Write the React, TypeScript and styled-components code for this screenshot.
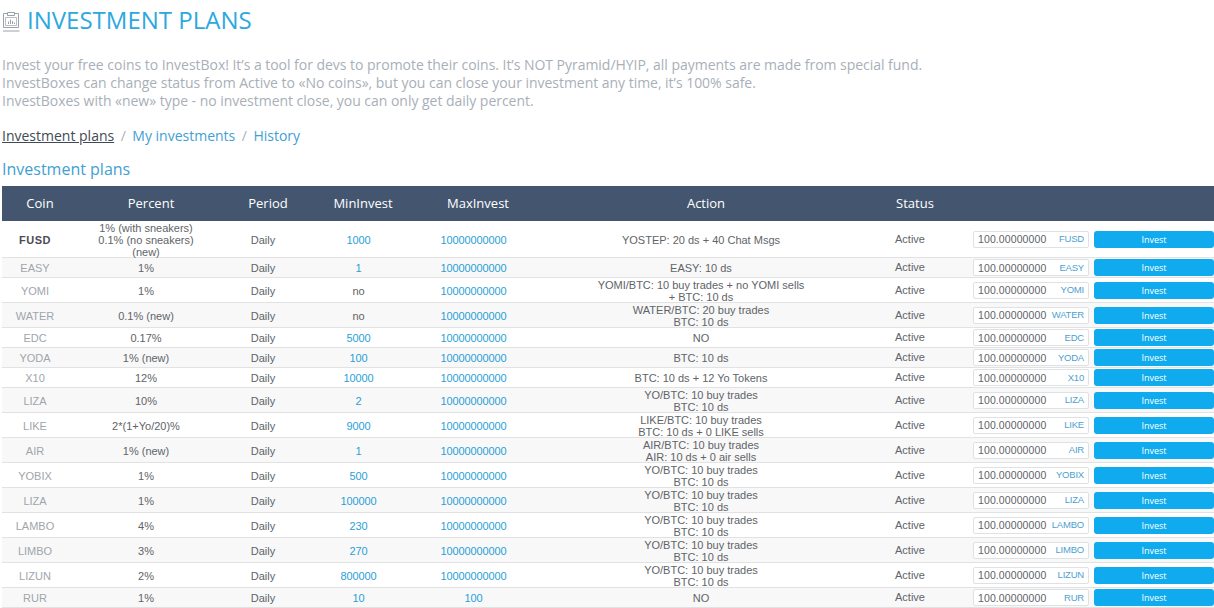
import React from 'react';
import styled, { createGlobalStyle } from 'styled-components';

interface IPlan {
  coin: string;
  percent: string[];
  min: string;
  max: string;
  action: string[];
}

const plans: IPlan[] = [
  { coin: 'FUSD', percent: ['1% (with sneakers)', '0.1% (no sneakers)', '(new)'], min: '1000', max: '10000000000', action: ['YOSTEP: 20 ds + 40 Chat Msgs'] },
  { coin: 'EASY', percent: ['1%'], min: '1', max: '10000000000', action: ['EASY: 10 ds'] },
  { coin: 'YOMI', percent: ['1%'], min: 'no', max: '10000000000', action: ['YOMI/BTC: 10 buy trades + no YOMI sells', '+ BTC: 10 ds'] },
  { coin: 'WATER', percent: ['0.1% (new)'], min: 'no', max: '10000000000', action: ['WATER/BTC: 20 buy trades', 'BTC: 10 ds'] },
  { coin: 'EDC', percent: ['0.17%'], min: '5000', max: '10000000000', action: ['NO'] },
  { coin: 'YODA', percent: ['1% (new)'], min: '100', max: '10000000000', action: ['BTC: 10 ds'] },
  { coin: 'X10', percent: ['12%'], min: '10000', max: '10000000000', action: ['BTC: 10 ds + 12 Yo Tokens'] },
  { coin: 'LIZA', percent: ['10%'], min: '2', max: '10000000000', action: ['YO/BTC: 10 buy trades', 'BTC: 10 ds'] },
  { coin: 'LIKE', percent: ['2*(1+Yo/20)%'], min: '9000', max: '10000000000', action: ['LIKE/BTC: 10 buy trades', 'BTC: 10 ds + 0 LIKE sells'] },
  { coin: 'AIR', percent: ['1% (new)'], min: '1', max: '10000000000', action: ['AIR/BTC: 10 buy trades', 'AIR: 10 ds + 0 air sells'] },
  { coin: 'YOBIX', percent: ['1%'], min: '500', max: '10000000000', action: ['YO/BTC: 10 buy trades', 'BTC: 10 ds'] },
  { coin: 'LIZA', percent: ['1%'], min: '100000', max: '10000000000', action: ['YO/BTC: 10 buy trades', 'BTC: 10 ds'] },
  { coin: 'LAMBO', percent: ['4%'], min: '230', max: '10000000000', action: ['YO/BTC: 10 buy trades', 'BTC: 10 ds'] },
  { coin: 'LIMBO', percent: ['3%'], min: '270', max: '10000000000', action: ['YO/BTC: 10 buy trades', 'BTC: 10 ds'] },
  { coin: 'LIZUN', percent: ['2%'], min: '800000', max: '10000000000', action: ['YO/BTC: 10 buy trades', 'BTC: 10 ds'] },
  { coin: 'RUR', percent: ['1%'], min: '10', max: '100', action: ['NO'] },
];

const columns = [66, 156, 78, 112, 118, 338, 80, 264];
const headers = ['Coin', 'Percent', 'Period', 'MinInvest', 'MaxInvest', 'Action', 'Status', ''];

const Lines: React.FC<{ lines: string[] }> = ({ lines }) => (
  <CellText>
    {lines.map((line) => (
      <div key={line}>{line}</div>
    ))}
  </CellText>
);

const PlanIcon = () => (
  <svg width="18" height="21" viewBox="0 0 18 21" fill="none" stroke="#9aa1aa" strokeWidth="1">
    <path d="M5.5 2.5H1.5V16.5H16.5V2.5H12.5" />
    <path d="M5.5 1.5H12.5V4.5H5.5Z" />
    <path d="M3.5 6.5H14.5V14.5H3.5Z" strokeWidth="0.7" />
    <path d="M6.5 13V10.5M8.5 13V8.5M10.5 13V10M12.5 13V11.5" />
    <path d="M1 20H17.5" />
  </svg>
);

export default function App() {
  return (
    <Page>
      <GlobalStyle />
      <Title>
        <PlanIcon />
        <span>INVESTMENT PLANS</span>
      </Title>
      <Description>
        <div>Invest your free coins to InvestBox! It’s a tool for devs to promote their coins. It’s NOT Pyramid/HYIP, all payments are made from special fund.</div>
        <div>InvestBoxes can change status from Active to «No coins», but you can close your investment any time, it’s 100% safe.</div>
        <div>InvestBoxes with «new» type - no investment close, you can only get daily percent.</div>
      </Description>
      <Breadcrumbs>
        <CrumbLink $active>Investment plans</CrumbLink>
        <Slash>/</Slash>
        <CrumbLink>My investments</CrumbLink>
        <Slash>/</Slash>
        <CrumbLink>History</CrumbLink>
      </Breadcrumbs>
      <SectionTitle>Investment plans</SectionTitle>
      <Table>
        <colgroup>
          {columns.map((width, index) => (
            <col key={index} width={width} />
          ))}
        </colgroup>
        <thead>
          <tr>
            {headers.map((header, index) => (
              <HeadCell key={index}>{header}</HeadCell>
            ))}
          </tr>
        </thead>
        <tbody>
          {plans.map((plan, index) => (
            <Row key={index}>
              <CoinCell $first={index === 0}>
                <CellText>{plan.coin}</CellText>
              </CoinCell>
              <Cell>
                <Lines lines={plan.percent} />
              </Cell>
              <Cell>
                <CellText>Daily</CellText>
              </Cell>
              <NumberCell $plain={plan.min === 'no'}>
                <CellText>{plan.min}</CellText>
              </NumberCell>
              <NumberCell>
                <CellText>{plan.max}</CellText>
              </NumberCell>
              <Cell>
                <Lines lines={plan.action} />
              </Cell>
              <StatusCell>Active</StatusCell>
              <FormCell>
                <InvestForm>
                  <AmountBox>
                    <AmountValue>100.00000000</AmountValue>
                    <AmountCoin>{plan.coin}</AmountCoin>
                  </AmountBox>
                  <InvestButton>Invest</InvestButton>
                </InvestForm>
              </FormCell>
            </Row>
          ))}
        </tbody>
      </Table>
    </Page>
  );
}

const GlobalStyle = createGlobalStyle`
  html, body {
    margin: 0;
    background: #fff;
    overflow: hidden;
  }
`;

const Page = styled.div`
  width: 1214px;
  height: 608px;
  overflow: hidden;
  padding-left: 2px;
  box-sizing: border-box;
  font-family: 'Open Sans', sans-serif;
`;

const Title = styled.h1`
  display: flex;
  align-items: center;
  gap: 7px;
  margin: 0;
  padding-top: 5px;
  height: 30px;
  font-size: 24px;
  line-height: 30px;
  font-weight: 400;
  color: #2ca8e0;
  svg {
    margin-top: 3px;
  }
`;

const Description = styled.div`
  margin-top: 21px;
  font-size: 14px;
  line-height: 18px;
  letter-spacing: -0.03px;
  color: #a9afb8;
`;

const Breadcrumbs = styled.div`
  display: flex;
  margin-top: 16px;
  font-size: 14px;
  line-height: 20px;
`;

const CrumbLink = styled.span<{ $active?: boolean }>`
  color: ${({ $active }) => ($active ? '#3f4a55' : '#3f9fd3')};
  text-decoration: ${({ $active }) => ($active ? 'underline' : 'none')};
`;

const Slash = styled.span`
  color: #a9afb8;
  margin: 0 6.5px;
`;

const SectionTitle = styled.div`
  margin-top: 12px;
  font-size: 16px;
  line-height: 22px;
  color: #3f9fd3;
`;

const Table = styled.table`
  margin-top: 6px;
  width: 1212px;
  table-layout: fixed;
  border-collapse: collapse;
  font-family: 'Liberation Sans', Arial, sans-serif;
  font-size: 11px;
  line-height: 12px;
  color: #606468;
`;

const HeadCell = styled.th`
  height: 35px;
  padding: 0 0 2px 10px;
  box-sizing: border-box;
  background: #44566f;
  color: #fff;
  font-family: 'Open Sans', sans-serif;
  font-size: 13px;
  font-weight: 400;
  text-align: center;
`;

const Row = styled.tr`
  border-bottom: 1px solid #e2e2e2;
  &:nth-child(even) {
    background: #f8f8f8;
  }
`;

const Cell = styled.td`
  padding: 1px 0 0;
  text-align: center;
  vertical-align: middle;
`;

const CellText = styled.div`
  margin-bottom: -1px;
`;

const CoinCell = styled(Cell)<{ $first?: boolean }>`
  font-weight: ${({ $first }) => ($first ? 700 : 400)};
  color: ${({ $first }) => ($first ? '#4a4d52' : '#a0a5ac')};
  letter-spacing: ${({ $first }) => ($first ? '0.5px' : '0')};
`;

const NumberCell = styled(Cell)<{ $plain?: boolean }>`
  padding-left: 1px;
  letter-spacing: -0.1px;
  color: ${({ $plain }) => ($plain ? '#606468' : '#2a9fd6')};
`;

const StatusCell = styled(Cell)`
  padding: 0;
`;

const FormCell = styled(Cell)`
  padding: 1.4px 0 0.6px;
`;

const InvestForm = styled.div`
  display: flex;
  align-items: center;
  gap: 5px;
  padding-left: 23px;
`;

const AmountBox = styled.div`
  display: flex;
  justify-content: space-between;
  align-items: center;
  box-sizing: border-box;
  width: 116px;
  height: 17px;
  padding: 0 4px;
  background: #fff;
  border: 1px solid #dfe2e5;
  border-radius: 2px;
`;

const AmountValue = styled.span`
  font-size: 10.5px;
  letter-spacing: 0.1px;
`;

const AmountCoin = styled.span`
  font-size: 9.5px;
  letter-spacing: -0.2px;
  color: #4d9fd0;
`;

const InvestButton = styled.button`
  flex: 1;
  height: 17px;
  padding: 0;
  border: none;
  border-radius: 3px;
  background: #0fabee;
  color: #fff;
  font-family: 'Open Sans', sans-serif;
  font-size: 9px;
`;
